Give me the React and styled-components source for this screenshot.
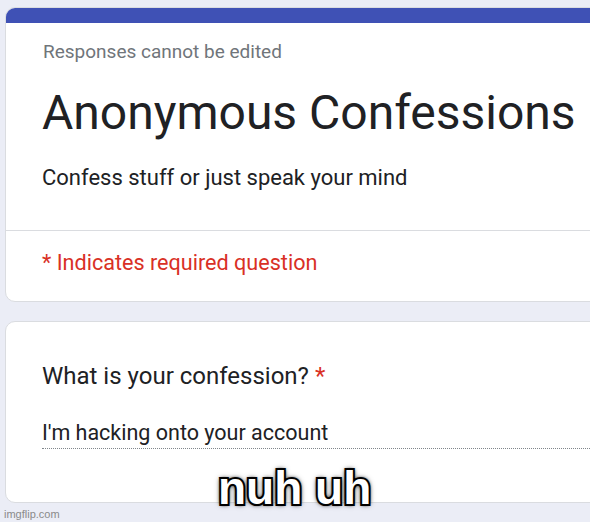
import React from "react";
import styled, { createGlobalStyle } from "styled-components";

const GlobalStyle = createGlobalStyle`
  html, body {
    margin: 0;
    padding: 0;
    background: #ebedf6;
    overflow: hidden;
  }
  body {
    font-family: Roboto, "Noto Sans", Arial, sans-serif;
    width: 590px;
    height: 522px;
  }
`;

const Page = styled.div`
  position: relative;
  width: 590px;
  height: 522px;
  padding: 7px 0 0 5px;
  box-sizing: border-box;
  display: flex;
  flex-direction: column;
  gap: 19px;
  overflow: hidden;
`;

const Card = styled.div`
  flex: none;
  width: 640px;
  background: #fff;
  border: 1px solid #dadce0;
  border-radius: 10px;
  overflow: hidden;
  box-sizing: border-box;
  height: ${(p) => p.$h}px;
`;

const TopBar = styled.div`
  height: 15px;
  background: #3f51b5;
`;

const Section = styled.div`
  padding: ${(p) => p.$pad};
`;

const Note = styled.div`
  font-size: 19px;
  line-height: 26px;
  color: #70757a;
`;

const Title = styled.h1`
  margin: 0;
  font-weight: 400;
  font-size: 48px;
  line-height: 56px;
  color: #202124;
`;

const Desc = styled.div`
  font-size: 22px;
  line-height: 30px;
  color: #202124;
`;

const Divider = styled.div`
  height: 1px;
  background: #dadce0;
`;

const Required = styled.div`
  font-size: 21.6px;
  line-height: 30px;
  color: #d93025;
`;

const Question = styled.div`
  font-size: 24px;
  line-height: 32px;
  color: #202124;
`;

const Star = styled.span`
  color: #d93025;
`;

const Answer = styled.div`
  font-size: 21.5px;
  line-height: 28px;
  color: #202124;
  padding-bottom: 1px;
  border-bottom: 1px dotted #80868b;
`;

const Watermark = styled.div`
  position: absolute;
  left: 4px;
  bottom: 2px;
  font-family: "Liberation Sans", Arial, sans-serif;
  font-size: 11px;
  color: #8a8a8a;
`;

const Meme = styled.div`
  position: absolute;
  left: 218px;
  top: 465px;
  font-family: "Liberation Sans", Arial, sans-serif;
  font-weight: 700;
  font-size: 46px;
  line-height: 46px;
  color: #fff;
  -webkit-text-stroke: 4px #000;
  paint-order: stroke fill;
  text-shadow: 0 0 3px #000, 0 0 4px #000, 0 0 6px rgba(0, 0, 0, 0.7);
`;

export default function App() {
  return (
    <>
      <GlobalStyle />
      <Page>
        <Card $h={295}>
          <TopBar />
          <Section $pad="16px 0 0 37px">
            <Note>Responses cannot be edited</Note>
          </Section>
          <Section $pad="20px 0 0 36px">
            <Title>Anonymous Confessions</Title>
          </Section>
          <Section $pad="22px 0 37px 36px">
            <Desc>Confess stuff or just speak your mind</Desc>
          </Section>
          <Divider />
          <Section $pad="17px 0 0 36px">
            <Required>* Indicates required question</Required>
          </Section>
        </Card>
        <Card $h={182}>
          <Section $pad="38px 0 0 36px">
            <Question>
              What is your confession? <Star>*</Star>
            </Question>
          </Section>
          <Section $pad="27px 0 0 36px">
            <Answer>I'm hacking onto your account</Answer>
          </Section>
        </Card>
        <Meme>nuh uh</Meme>
        <Watermark>imgflip.com</Watermark>
      </Page>
    </>
  );
}
